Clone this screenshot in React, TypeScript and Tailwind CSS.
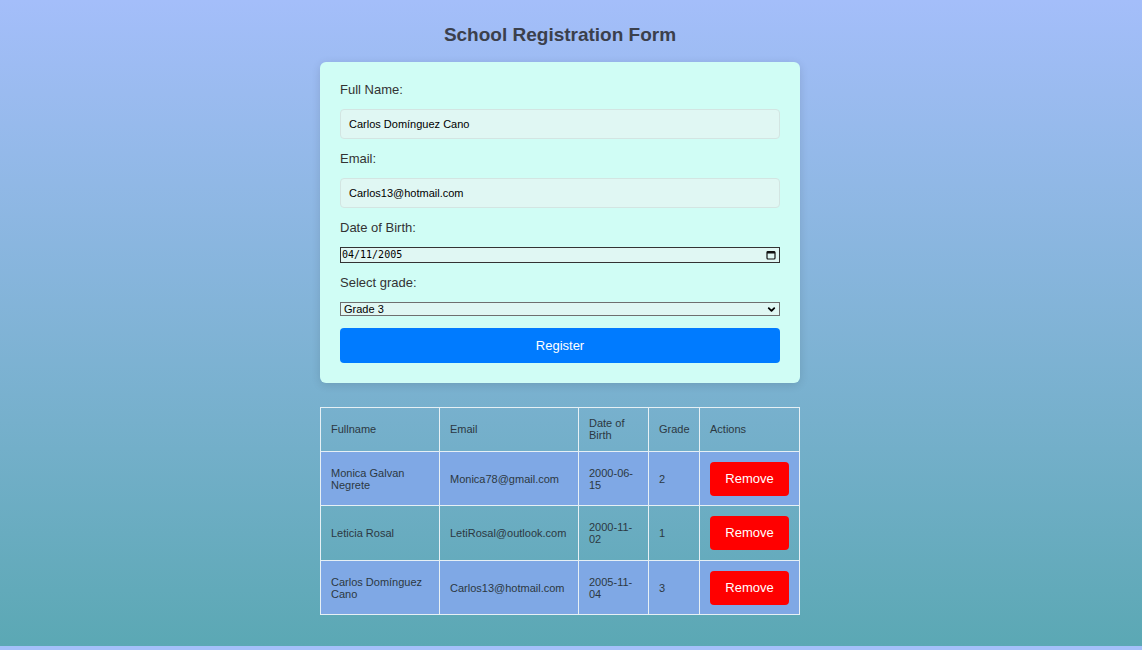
import React from "react";
import { ChevronDown } from "lucide-react";

const rows = [
  { name: "Monica Galvan Negrete", email: "Monica78@gmail.com", dob: "2000-06-15", grade: "2" },
  { name: "Leticia Rosal", email: "LetiRosal@outlook.com", dob: "2000-11-02", grade: "1" },
  { name: "Carlos Domínguez Cano", email: "Carlos13@hotmail.com", dob: "2005-11-04", grade: "3" },
];

function splitDob(d: string) {
  return d.slice(0, 8) + "\u200b" + d.slice(8);
}

export default function App() {
  return (
    <div className="w-full min-h-[650px] bg-[#a4c0f9]" style={{ fontFamily: '"Liberation Sans", Arial, sans-serif' }}>
      <div className="h-[646px] bg-gradient-to-b from-[#a4befa] to-[#5ba8b4] pr-[22px]">
        <div className="flex flex-col items-center pt-[21px]">
          <h1 className="text-[19px] leading-[28px] font-bold text-[#3b404c] m-0">School Registration Form</h1>
          <div className="mt-[13px] w-[480px] bg-[#d0fdf5] rounded-[6px] shadow-[0_2px_10px_rgba(0,0,0,0.12)] px-[20px] pt-[20px] pb-[20px] flex flex-col">
            <div className="text-[13px] leading-[16px] text-[#333]">Full Name:</div>
            <div className="mt-[11px] h-[30px] rounded-[4px] border border-[#d3e5e2] bg-[#e0f7f3] flex items-center pl-[8px] text-[11px] text-black">
              Carlos Domínguez Cano
            </div>
            <div className="mt-[12px] text-[13px] leading-[16px] text-[#333]">Email:</div>
            <div className="mt-[11px] h-[30px] rounded-[4px] border border-[#d3e5e2] bg-[#e0f7f3] flex items-center pl-[8px] text-[11px] text-black">
              Carlos13@hotmail.com
            </div>
            <div className="mt-[12px] text-[13px] leading-[16px] text-[#333]">Date of Birth:</div>
            <div className="mt-[11px] h-[16px] border border-[#333] bg-[#e0f7f3] flex items-center justify-between pl-[1px] pr-[2px]">
              <span className="text-[10px] leading-[12px] text-black" style={{ fontFamily: '"DejaVu Sans Mono", "Liberation Mono", monospace' }}>04/11/2005</span>
              <svg width="10" height="10" viewBox="0 0 10 10" className="mr-[1px]">
                <rect x="1" y="1.5" width="8" height="7.5" rx="1" fill="none" stroke="#111" strokeWidth="1.2" />
                <rect x="1" y="1.5" width="8" height="2" fill="#111" />
              </svg>
            </div>
            <div className="mt-[12px] text-[13px] leading-[16px] text-[#333]">Select grade:</div>
            <div className="mt-[11px] h-[14px] border border-[#6f6f6f] bg-[#e0f7f3] flex items-center justify-between pl-[3px] pr-[2px]">
              <span className="text-[11px] leading-[12px] text-black">Grade 3</span>
              <ChevronDown size={11} strokeWidth={4} color="#000" />
            </div>
            <button className="mt-[12px] h-[35px] rounded-[4px] bg-[#007bff] text-white text-[13px] flex items-center justify-center">
              Register
            </button>
          </div>

          <table className="mt-[24px] w-[479px] border-collapse text-[11px] text-[#2c3842] table-fixed">
            <colgroup>
              <col className="w-[119px]" />
              <col className="w-[139px]" />
              <col className="w-[70px]" />
              <col className="w-[51px]" />
              <col className="w-[100px]" />
            </colgroup>
            <thead>
              <tr className="h-[44px]">
                {["Fullname", "Email", "Date of Birth", "Grade", "Actions"].map((h) => (
                  <th key={h} className="border border-[#e6f0f5] px-[10px] pb-[1px] text-left font-normal leading-[12px] align-middle">
                    {h}
                  </th>
                ))}
              </tr>
            </thead>
            <tbody>
              {rows.map((r, i) => (
                <tr key={i} className={i % 2 === 0 ? "h-[54px] bg-[#7fa8e5]" : "h-[55px]"}>
                  <td className="border border-[#e6f0f5] px-[10px] leading-[12px] align-middle">{r.name}</td>
                  <td className="border border-[#e6f0f5] px-[10px] leading-[12px] align-middle">{r.email}</td>
                  <td className="border border-[#e6f0f5] px-[10px] leading-[12px] align-middle">{splitDob(r.dob)}</td>
                  <td className="border border-[#e6f0f5] px-[10px] leading-[12px] align-middle">{r.grade}</td>
                  <td className="border border-[#e6f0f5] px-[10px] align-middle">
                    <button className="w-[79px] h-[34px] rounded-[4px] bg-[#ff0000] text-white text-[13px] flex items-center justify-center">
                      Remove
                    </button>
                  </td>
                </tr>
              ))}
            </tbody>
          </table>
        </div>
      </div>
    </div>
  );
}
